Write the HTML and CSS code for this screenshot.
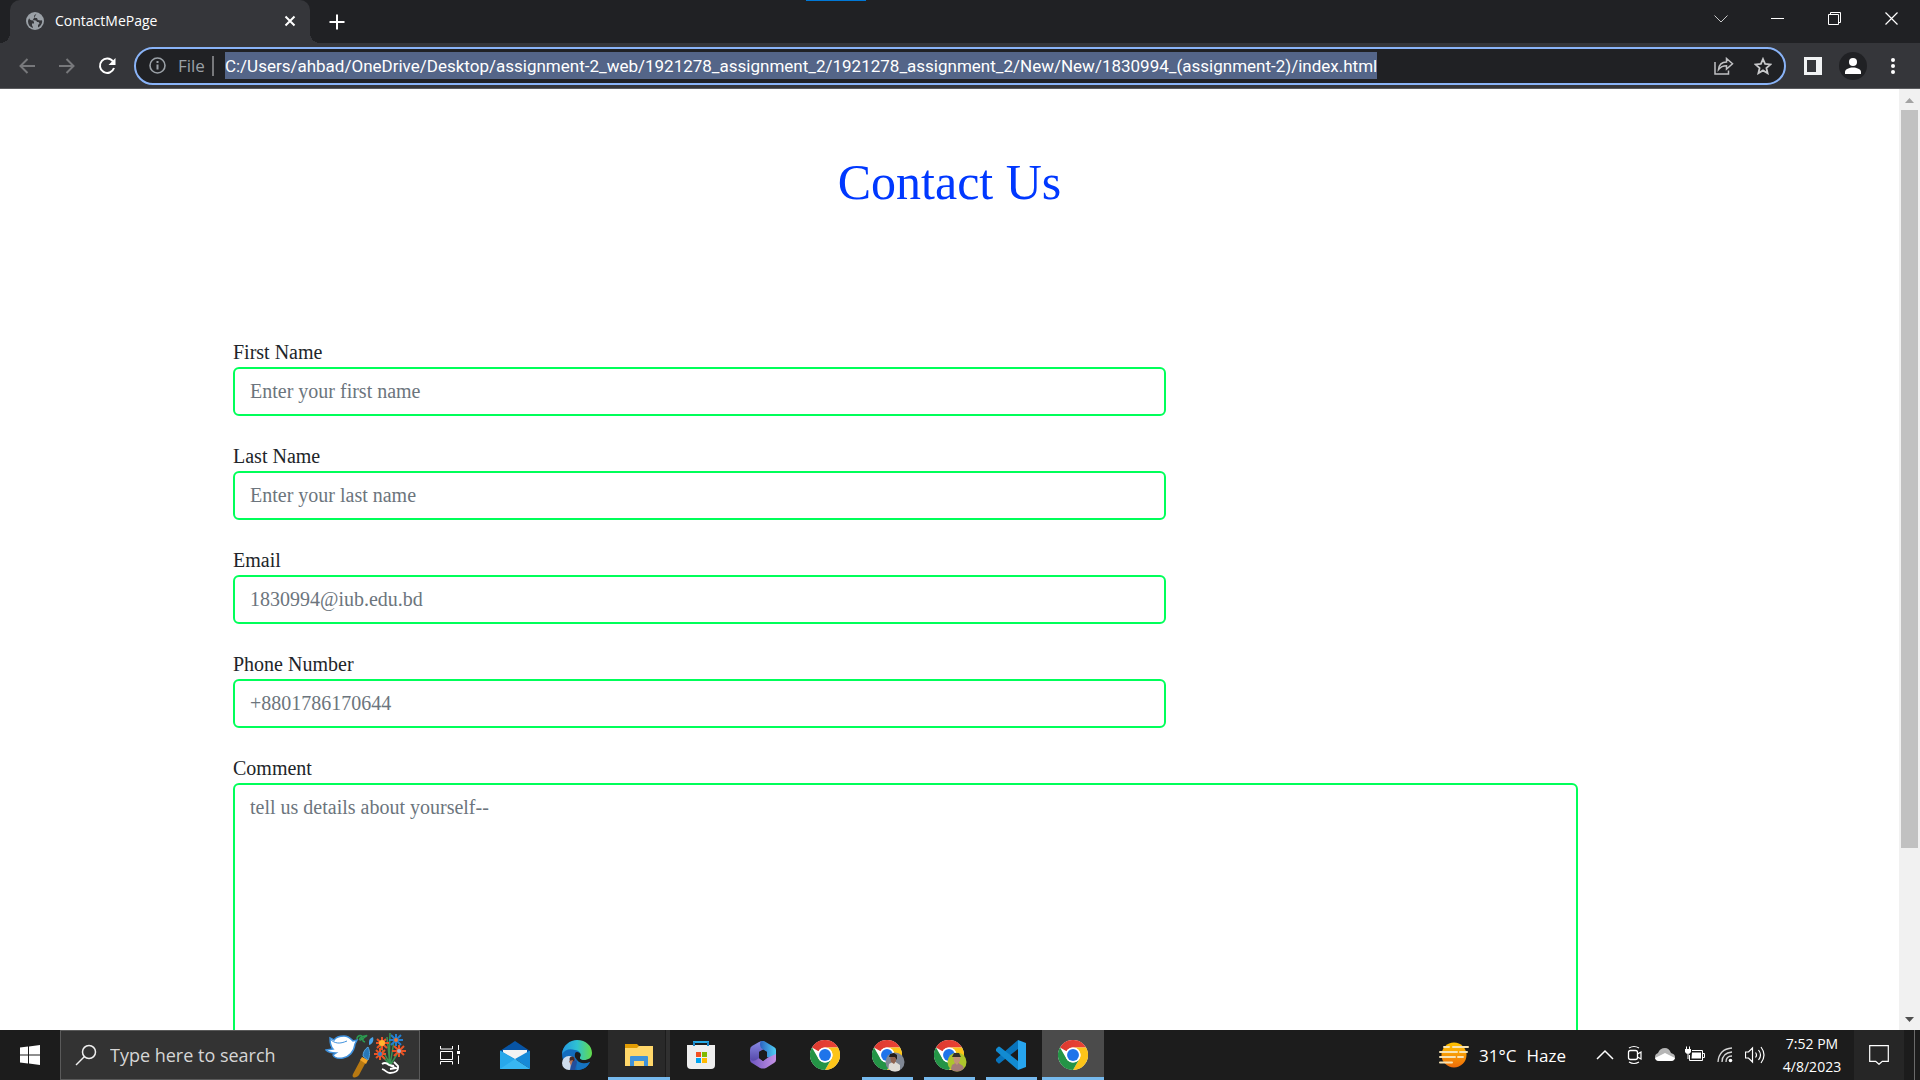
FILE: index.html
```html
<!DOCTYPE html>
<html lang="en">
<head>
<meta charset="utf-8">
<meta name="viewport" content="width=device-width, initial-scale=1">
<title>ContactMePage</title>
<link rel="stylesheet" href="styles.css">
</head>
<body>
<svg class="defs" aria-hidden="true">
  <defs>
    <linearGradient id="red" x1="0" y1="0" x2="1" y2="0"><stop offset="0" stop-color="#dd3a30"/><stop offset="1" stop-color="#ea4335"/></linearGradient>
    <symbol id="chrome" viewBox="0 0 48 48">
      <circle cx="24" cy="24" r="24" fill="#fff"/>
      <path d="M3.2 12A24 24 0 0 1 44.8 12H24A12 12 0 0 0 13.6 18Z" fill="url(#red)"/>
      <path d="M44.8 12A24 24 0 0 1 24 48L34.4 30A12 12 0 0 0 24 12Z" fill="#fcc419"/>
      <path d="M24 48A24 24 0 0 1 3.2 12L13.6 30A12 12 0 0 0 34.4 30Z" fill="#249446"/>
      <circle cx="24" cy="24" r="12" fill="#fff"/>
      <circle cx="24" cy="24" r="9.5" fill="#1f74ea"/>
    </symbol>
  </defs>
</svg>
<div class="screen">
  <header class="browser">
    <div class="tabstrip">
      <div class="tab">
        <svg width="18" height="18" viewBox="0 0 18 18"><circle cx="9" cy="9" r="9" fill="#9aa0a6"/><path d="M3 5.500c0 2 2 3 3.500 3l1.500 1v2H6v1.500c0 1 1 1.500 1 3-3-1-5-3-5-6.500 0-1 .4-2.200 1-3zM10.500 1.700C9 3 8 3 8 4.500S9 6 11 6l.8 2 2.700.5c1-.4 1.500-.2 1.700.5 0 3-2 5.500-4.200 6.500V13l1.500-1.500-1-1.500H10l-1.500-1.500H6.500" fill="#35363a"/><path d="M7 8.500h3l1.500 2-1 2" fill="#9aa0a6"/></svg>
        <span class="tab-title">ContactMePage</span>
        <button class="icon-btn" aria-label="Close tab"><svg width="12" height="12" viewBox="0 0 12 12"><path d="M1.500 1.500l9 9M10.500 1.500l-9 9" stroke="#fff" stroke-width="2"/></svg></button>
      </div>
      <button class="icon-btn new-tab" aria-label="New tab"><svg width="16" height="16" viewBox="0 0 16 16"><path d="M8 .5v15M.5 8h15" stroke="#fff" stroke-width="2"/></svg></button>
      <div class="window-controls">
        <button class="icon-btn" aria-label="Search tabs"><svg width="14" height="8" viewBox="0 0 14 8"><path d="M.5.500l6.500 6.500 6.500-6.500" fill="none" stroke="#c8c9ca"/></svg></button>
        <button class="icon-btn" aria-label="Minimize"><svg width="13" height="13" viewBox="0 0 13 13"><path d="M0 6.500h13" stroke="#fff"/></svg></button>
        <button class="icon-btn" aria-label="Restore"><svg width="13" height="13" viewBox="0 0 13 13"><path d="M.5 2.500h10v10H.5zM2.500 2V.5h10v10H11" fill="none" stroke="#fff"/></svg></button>
        <button class="icon-btn" aria-label="Close"><svg width="13" height="13" viewBox="0 0 13 13"><path d="M.5.500l12 12M12.500.500l-12 12" stroke="#fff" stroke-width="1.200"/></svg></button>
      </div>
      <div class="drag-mark"></div>
    </div>
    <nav class="toolbar">
      <button class="icon-btn nav-btn" aria-label="Back"><svg width="16" height="16" viewBox="0 0 16 16"><path d="M16 8H1.500M8.500 1L1.500 8l7 7" fill="none" stroke="#77787b" stroke-width="2"/></svg></button>
      <button class="icon-btn nav-btn" aria-label="Forward"><svg width="16" height="16" viewBox="0 0 16 16"><path d="M0 8h14.500M7.500 1l7 7-7 7" fill="none" stroke="#77787b" stroke-width="2"/></svg></button>
      <button class="icon-btn nav-btn" aria-label="Reload"><svg width="18" height="18" viewBox="0 0 18 18"><path d="M15 4.500A7.200 7.200 0 1 0 16 11" fill="none" stroke="#fff" stroke-width="2"/><path d="M17.500 1v7h-7z" fill="#fff"/></svg></button>
      <div class="omnibox">
        <svg width="17" height="17" viewBox="0 0 17 17"><circle cx="8.500" cy="8.500" r="7.500" fill="none" stroke="#9aa0a6" stroke-width="1.600"/><path d="M8.500 7.500v5M8.500 4v2" stroke="#9aa0a6" stroke-width="2"/></svg>
        <label class="scheme" for="url">File</label>
        <span class="divider"></span>
        <input class="url" id="url" type="text" value="C:/Users/ahbad/OneDrive/Desktop/assignment-2_web/1921278_assignment_2/1921278_assignment_2/New/New/1830994_(assignment-2)/index.html">
        <div class="omnibox-actions">
          <button class="icon-btn" aria-label="Share"><svg width="20" height="18" viewBox="0 0 20 18"><path d="M1 5v12h13.500v-3.500M4.500 12.500C5 8 8 5 12.500 5V1.500l6 5.300-6 5.200V8.800C9 8.800 6.500 10 4.500 12.500z" fill="none" stroke="#c0c1c3" stroke-width="1.500"/></svg></button>
          <button class="icon-btn" aria-label="Bookmark"><svg width="18" height="18" viewBox="0 0 18 18"><path d="M9 2l2.100 4.900 5.400.5-4.100 3.600 1.200 5.200L9 13.400l-4.600 2.800 1.200-5.200-4.100-3.600 5.400-.5z" fill="none" stroke="#c8c9cb" stroke-width="1.800"/></svg></button>
        </div>
      </div>
      <button class="icon-btn side-btn" aria-label="Side panel"><svg width="18" height="18" viewBox="0 0 18 18"><path d="M0 0h18v18H0zM3 3v12h9V3z" fill="#f1f3f4" fill-rule="evenodd"/></svg></button>
      <button class="icon-btn side-btn" aria-label="Profile"><svg width="28" height="28" viewBox="0 0 28 28"><circle cx="14" cy="14" r="14" fill="#202124"/><circle cx="14" cy="10" r="4" fill="#fff"/><path d="M6 22v-2c0-3 4.500-4.500 8-4.500s8 1.500 8 4.500v2z" fill="#fff"/></svg></button>
      <button class="icon-btn side-btn" aria-label="Menu"><svg width="4" height="16" viewBox="0 0 4 16"><g fill="#fff"><circle cx="2" cy="2" r="2"/><circle cx="2" cy="8" r="2"/><circle cx="2" cy="14" r="2"/></g></svg></button>
    </nav>
  </header>

  <div class="viewport">
    <main class="page">
      <h1>Contact Us</h1>
      <form class="contact">
        <label for="first">First Name</label>
        <input class="field" id="first" type="text" placeholder="Enter your first name">
        <label for="last">Last Name</label>
        <input class="field" id="last" type="text" placeholder="Enter your last name">
        <label for="email">Email</label>
        <input class="field" id="email" type="email" placeholder="1830994@iub.edu.bd">
        <label for="phone">Phone Number</label>
        <input class="field" id="phone" type="tel" placeholder="+8801786170644">
        <label for="comment">Comment</label>
        <textarea class="field comment" id="comment" placeholder="tell us details about yourself--"></textarea>
      </form>
    </main>
    <div class="scrollbar" aria-hidden="true">
      <svg width="9" height="5" viewBox="0 0 9 5"><path d="M0 5L4.500 0 9 5z" fill="#a3a3a3"/></svg>
      <div class="track"><div class="thumb"></div></div>
      <svg width="9" height="5" viewBox="0 0 9 5"><path d="M0 0l4.500 5L9 0z" fill="#505050"/></svg>
    </div>
  </div>

  <footer class="taskbar">
    <button class="icon-btn start" aria-label="Start"><svg width="20" height="20" viewBox="0 0 20 20"><path d="M0 2.600L8 1.500v8H0zM9 1.400L20 0v9.500H9zM0 10.500h8v8l-8-1.100zM9 10.500h11V20L9 18.600z" fill="#fff"/></svg></button>
    <div class="search">
      <svg width="22" height="22" viewBox="0 0 22 22"><circle cx="14" cy="8" r="6.500" fill="none" stroke="#f0f0f0" stroke-width="1.500"/><path d="M9.500 12.500L1 21" stroke="#f0f0f0" stroke-width="1.500"/></svg>
      <input type="text" placeholder="Type here to search" aria-label="Type here to search">
      <svg class="doodle" width="82" height="46" viewBox="0 0 82 46">
        <path d="M1 18l7-1C5 14 5 10 5 6l4 2c2-3 6-4 10-4 5 0 7 3 9 5l4-1-2 4c-1 8-6 13-12 14-6 1-9-1-10-3l3-2c-5 0-8-1-10-3z" fill="#fff" stroke="#3f91dd" stroke-width="1.500"/><path d="M5 7c5 5 10 5 17 2" fill="none" stroke="#3f91dd"/>
        <path d="M32 7c0-4 6-5 5-1s-5 1 0-1 6-2 3 0-3 4 0 5" fill="none" stroke="#2c9b51" stroke-width="1.500"/>
        <path d="M36 27l5 3-7 13c-2 3-8 4-6-1z" fill="#b87912"/><path d="M37 25l6 3-2 4-6-4z" fill="#f4a526"/><path d="M38 24c0-4 2-7 5-9 2 4 2 9 0 13z" fill="#2878b8" stroke="#55a5e0"/><path d="M44 10c0-3 2-4 4-5 1 3 0 7-4 8z" fill="#4aa5ea"/>
        <path d="M65 33L62 5M64 33L65 1M65 33l4-24M64 32L54 20M66 32l8-13M64 30l-9-16" fill="none" stroke="#399452" stroke-width="1.500"/>
        <g stroke="#ea5425" stroke-width="2"><path d="M57 5v13M51 11h13M52 7l10 9M52 16l9-9M55 16v12M49 22h12M51 18l9 9M51 26l9-8M74 13v12M67 19h14M69 14l10 9M69 24l10-10"/></g>
        <path d="M71 2v12M64 8h14M66 3l10 10M66 13L76 3" stroke="#237fd1" stroke-width="2"/>
        <circle cx="57" cy="11" r="3" fill="#ffb52e"/><circle cx="55" cy="22" r="2" fill="#2782d0"/><circle cx="74" cy="19" r="2" fill="#a5b0c8"/><circle cx="71" cy="8" r="2" fill="#f0742b"/>
        <path d="M57 32c3-2 5-1 7 1l5 1M57 37c4 1 4 4 8 4 5 0 9-2 8-7l-4-4M64 33l7 3-6 1" fill="none" stroke="#fff" stroke-width="1.800"/>
      </svg>
    </div>
    <div class="apps">
      <button class="app task-view" aria-label="Task view"><svg width="20" height="20" viewBox="0 0 20 20"><path d="M.5 1v3h12V1M.5 6.500h12v8H.500zM.5 19.500v-3h12v3M18.500 0v5M18.500 10.500V19" fill="none" stroke="#fff"/><path d="M17 6h3v3h-3z" fill="#fff"/></svg></button>
      <button class="app" aria-label="Mail"><svg width="30" height="28" viewBox="0 0 30 28"><path d="M0 10L15 0l15 10v4H0z" fill="#0754a4"/><path d="M3 9h24v4L15 19 3 13z" fill="#f3f3f3"/><path d="M0 9.500l15 8.500L0 28z" fill="#1a96dd"/><path d="M0 9.500l30 18.500H0z" fill="#28a8ea"/><path d="M30 9.500V28L15 18z" fill="#1689d7"/><path d="M15 18l15 10H0z" fill="#38b6f2"/></svg></button>
      <button class="app" aria-label="Edge"><svg width="30" height="30" viewBox="0 0 30 30"><defs><linearGradient id="eg"><stop offset="0" stop-color="#2396df"/><stop offset=".5" stop-color="#2fc2d2"/><stop offset="1" stop-color="#63dc49"/></linearGradient></defs><path d="M0 14C1 5 8 1 15 3l3 10-4 2 1 6c4 4 8 4 13 1-3 6-8 8-13 8C6 30 0 23 0 14z" fill="#126cbe"/><path d="M0 14C1 5 8 0 15 0c9 0 15 6 15 13 0 5-4 7-8 7-3 0-5-1-4-3 2-3-1-7-5-7C7 8 3 10 0 14z" fill="url(#eg)"/><path d="M15 12c3 0 4 3 3 5-1 3 3 4 7 3-5 2-11 0-12-3-.5-3 0-5 2-5z" fill="#1c1c1c"/><path d="M15 20c3 4 8 4 13 2-3 6-8 8-13 8z" fill="#1673c0"/><circle cx="7" cy="23" r="7" fill="#cfdcec"/><path d="M7 21l5-3 3 4-2 8H8l1-6z" fill="#234e9b"/><circle cx="10" cy="19" r="2.500" fill="#4a2a27"/><path d="M7 21l4-1-2 6z" fill="#b77759"/></svg></button>
      <button class="app hover running" aria-label="File Explorer"><svg width="28" height="24" viewBox="0 0 28 24"><path d="M0 1h12l2 2v5H0z" fill="#e19c03"/><path d="M0 5h12l2-2h14v20H0z" fill="#ffd76a"/><path d="M5 23V14q0-1 1-1h16q1 0 1 1v9h-4v-5H9v5z" fill="#3f92d9"/></svg></button>
      <button class="app" aria-label="Microsoft Store"><svg width="30" height="30" viewBox="0 0 30 30"><path d="M8 6V2h14v4" fill="none" stroke="#26a9e6" stroke-width="2"/><path d="M1 5h28v20q0 4-4 4H5q-4 0-4-4z" fill="#eee"/><path d="M8 2v4M22 2v4" stroke="#1a86c8" stroke-width="2"/><path d="M10 12h5v5h-5z" fill="#f25022"/><path d="M16 12h5v5h-5z" fill="#7fba00"/><path d="M10 18h5v5h-5z" fill="#00a4ef"/><path d="M16 18h5v5h-5z" fill="#ffb900"/></svg></button>
      <button class="app" aria-label="Microsoft 365"><svg width="26" height="28" viewBox="0 0 26 28"><defs><linearGradient id="m1" x2="0" y2="1"><stop offset="0" stop-color="#8a8be6"/><stop offset="1" stop-color="#5547a8"/></linearGradient><linearGradient id="m2"><stop offset="0" stop-color="#2c62c0"/><stop offset="1" stop-color="#50d0f5"/></linearGradient><linearGradient id="m3"><stop offset="0" stop-color="#6d55c0"/><stop offset="1" stop-color="#c592e6"/></linearGradient></defs><path d="M13 0q-2 0-4 1L2 5Q0 6 0 9v10q1 2 5 1l4-2v-7l8-5z" fill="url(#m1)"/><path d="M11 0h3l10 6q2 1 2 3v10l-9-3v-5l-6-4q-2-4 0-7z" fill="url(#m2)"/><path d="M0 18q2 3 6 1l3-2 4 3 4-3 9-4v6q0 2-2 3l-8 5q-3 1-6 0l-8-5q-2-1-2-4z" fill="url(#m3)"/><path d="M13 9l4 2v6l-4 3-4-3v-6z" fill="#1c1c1c"/></svg></button>
      <button class="app" aria-label="Chrome"><svg width="30" height="30"><use href="#chrome"/></svg></button>
      <button class="app running inset" aria-label="Chrome, profile one"><svg width="30" height="30"><use href="#chrome"/></svg><svg class="avatar" width="20" height="20" viewBox="0 0 20 20"><defs><clipPath id="av"><circle cx="10" cy="10" r="9.500"/></clipPath></defs><g clip-path="url(#av)"><path d="M0 0h20v20H0z" fill="#7f8794"/><path d="M3 20l1-8 5-3 6 4v7z" fill="#dedbd6"/><path d="M5 4h6v5l-2 3-3-2z" fill="#8f6350"/><path d="M4 5l1-3 4-1 3 2v5l-2-3z" fill="#211d1e"/></g></svg></button>
      <button class="app running inset" aria-label="Chrome, profile two"><svg width="30" height="30"><use href="#chrome"/></svg><svg class="avatar" width="20" height="20" viewBox="0 0 20 20"><g clip-path="url(#av)"><path d="M0 0h20v20H0z" fill="#adc52d"/><path d="M3 20l2-7 5-3 6 4 2 6z" fill="#a47c78"/><path d="M6 4h7v5l-3 4-3-3z" fill="#c29477"/><path d="M5 5l2-4h5l2 4z" fill="#34302b"/></g></svg></button>
      <button class="app running inset" aria-label="Visual Studio Code"><svg width="30" height="30" viewBox="0 0 30 30"><path d="M22 0l8 3v24l-8 3z" fill="#27a5ef"/><path d="M22 0v9L4 23q-1 1-2 0l-2-2q-1-1 0-2z" fill="#0873bb"/><path d="M22 30v-9L4 7Q3 6 2 7L0 9q-1 1 0 2z" fill="#128bd2"/></svg></button>
      <button class="app active running" aria-label="Chrome, active window"><svg width="30" height="30"><use href="#chrome"/></svg></button>
    </div>
    <div class="tray">
      <button class="weather"><svg width="30" height="26" viewBox="0 0 30 26"><defs><linearGradient id="sun" x2="0" y2="1"><stop offset="0" stop-color="#ffc400"/><stop offset="1" stop-color="#ef6c0a"/></linearGradient></defs><circle cx="15" cy="13" r="12.500" fill="url(#sun)"/><path d="M5 5h5M14 5h15M1 10h17M21 10h7M1 15h15M19 15h5M1 20.500h12" stroke="#f7e3b4" stroke-width="2" stroke-linecap="round"/></svg><span>31°C</span><span>Haze</span></button>
      <div class="status">
        <button class="icon-btn" aria-label="Show hidden icons"><svg width="20" height="20" viewBox="0 0 20 20"><path d="M2 14l8-8 8 8" fill="none" stroke="#fff" stroke-width="1.500"/></svg></button>
        <button class="icon-btn" aria-label="Meet now"><svg width="20" height="20" viewBox="0 0 20 20"><rect x="3.500" y="5.500" width="9" height="9" rx="2" fill="none" stroke="#fff" stroke-width="1.300"/><path d="M12.500 9l3.500-2v7l-3.500-2M4 3q5-3 10 0M4 17q5 3 10 0" fill="none" stroke="#fff" stroke-width="1.200"/></svg></button>
        <button class="icon-btn" aria-label="OneDrive"><svg width="20" height="20" viewBox="0 0 20 20"><path d="M4 16Q0 16 0 12q0-3 3-4 2-5 7-5 4 0 6 5 4 1 4 4 0 4-4 4z" fill="#b5b5b5"/><path d="M4 16q-3 0-4-3l10-5 10 5q-1 3-4 3z" fill="#fff"/></svg></button>
        <button class="icon-btn" aria-label="Battery"><svg width="20" height="20" viewBox="0 0 20 20"><path d="M7 5.500h10.500v10H4.500V10M18 8.500h1.500v4H18" fill="none" stroke="#fff"/><path d="M7 7.500h9v6H6.500zM0 4h6v3q-1 2-3 2T0 7zM1 1.500h1V4H1zM4 1.500h1V4H4zM2.500 9h1v5h-1z" fill="#fff"/></svg></button>
        <button class="icon-btn" aria-label="Network"><svg width="20" height="20" viewBox="0 0 20 20"><path d="M3 17Q4 4 17 3M7 17Q7 8 17 7M11 17q0-6 6-6" fill="none" stroke="#d6d6d6" stroke-width="1.300"/><circle cx="15.500" cy="15.500" r="1.800" fill="#fff"/></svg></button>
        <button class="icon-btn" aria-label="Volume"><svg width="20" height="20" viewBox="0 0 20 20"><path d="M.5 7h3l4-4v14l-4-4h-3zM10.500 7.500q2 2.500 0 5M13.500 5q4 5 0 10M16 2q6 8 0 16" fill="none" stroke="#fff" stroke-width="1.200"/></svg></button>
      </div>
      <time class="clock" datetime="2023-04-08T19:52"><span>7:52 PM</span><span>4/8/2023</span></time>
      <button class="icon-btn notices" aria-label="Notifications"><svg width="20" height="20" viewBox="0 0 20 20"><path d="M.7.700h18.600v15.600h-6L10 19.300l-3.300-3H.7z" fill="none" stroke="#fff" stroke-width="1.200"/></svg></button>
      <span class="show-desktop"></span>
    </div>
  </footer>
</div>
</body>
</html>
```
FILE: styles.css
```css
* { box-sizing: border-box; }
body { margin: 0; background: #fff; font-family: "Open Sans", "Noto Sans", sans-serif; }
svg { display: block; flex: none; }
.defs { position: absolute; width: 0; height: 0; }
.screen { height: 100vh; display: flex; flex-direction: column; overflow: hidden; }
button { font: inherit; color: inherit; border: 0; padding: 0; background: none; }
.icon-btn { display: flex; align-items: center; justify-content: center; flex: none; }

/* Browser frame */
.browser { flex: none; background: #35363a; color: #fff; border-bottom: 1px solid #5b5c5f; }
.tabstrip { position: relative; display: flex; height: 43px; background: #202124; padding-left: 10px; }
.tab { position: relative; display: flex; align-items: center; gap: 11px; width: 300px; padding: 0 14px 2px 16px; background: #35363a; border-radius: 10px 10px 0 0; }
.tab::before, .tab::after { content: ""; position: absolute; bottom: 0; width: 10px; height: 10px; }
.tab::before { left: -10px; background: radial-gradient(circle at 0 0, #202124 10px, #35363a 10px); }
.tab::after { right: -10px; background: radial-gradient(circle at 100% 0, #202124 10px, #35363a 10px); }
.tab-title { flex: 1; font-size: 14px; line-height: 20px; }
.new-tab { width: 54px; }
.window-controls { display: flex; margin-left: auto; height: 37px; }
.window-controls .icon-btn { width: 57px; }
.drag-mark { position: absolute; left: 42%; top: 0; width: 60px; height: 1px; background: #0078d7; }
.toolbar { display: flex; align-items: center; height: 45px; padding: 0 7px; }
.nav-btn { width: 40px; }
.omnibox { flex: 1; min-width: 0; display: flex; align-items: center; height: 38px; margin: 0 7px; padding: 0 12px 0 13px; border: 2px solid #8ab4f8; border-radius: 19px; background: #202124; font-size: 17px; }
.scheme { margin-left: 12px; color: #9aa0a6; }
.divider { width: 2px; height: 20px; margin: 0 11px 0 7px; background: #77787b; }
.url { min-width: 0; height: 27px; padding: 0; border: 0; border-radius: 0; background: #546588; color: #fff; font-family: Roboto, "Open Sans", sans-serif; font-size: 17px; field-sizing: content; }
.omnibox-actions { display: flex; gap: 20px; margin-left: auto; }
.side-btn { width: 40px; }

/* Page content */
.viewport { flex: 1; min-height: 0; display: flex; }
.page { flex: 1; overflow: hidden; padding-top: 63px; font-family: "Liberation Serif", serif; color: #212529; }
h1 { margin: 0 0 125px; text-align: center; font-size: 50px; line-height: 60px; font-weight: 400; color: #0038ff; }
.contact { display: flex; flex-direction: column; align-items: flex-start; margin: 0 321px 0 233px; font-size: 20px; line-height: 30px; }
.field { width: 69.4%; height: 49px; margin: 0 0 25px; padding: 0 15px; border: 2px solid #00ff59; border-radius: 6px; background: #fff; font: inherit; color: #212529; }
.field::placeholder { color: #6c757d; opacity: 1; }
.comment { width: 100%; height: 320px; padding: 7px 15px; }
.scrollbar { flex: none; width: 21px; display: flex; flex-direction: column; align-items: center; padding: 9px 0 8px; background: #f1f1f1; }
.track { flex: 1; width: 17px; margin: 7px 0; }
.thumb { height: 82%; background: #c1c1c1; }

/* Taskbar */
.taskbar { flex: none; display: flex; height: 50px; background: #1c1c1c; color: #fff; }
.start { width: 60px; }
.search { display: flex; align-items: center; width: 360px; padding: 0 12px 0 14px; gap: 13px; background: #333; border: 1px solid #5a5a5a; }
.search input { flex: 1; min-width: 0; padding: 0; border: 0; background: none; color: #fff; font: inherit; font-size: 18px; }
.search input::placeholder { color: #d6d6d6; opacity: 1; }
.apps { display: flex; }
.app { position: relative; display: flex; align-items: center; justify-content: center; width: 62px; }
.task-view { width: 60px; margin-right: 4px; }
.running::after { content: ""; position: absolute; inset: auto 0 0; height: 3px; background: #76b9ed; }
.inset::after { inset: auto 5px 0 6px; }
.hover { background: linear-gradient(to left, #303030 4px, #1c1c1c 4px, #1c1c1c 5px, #292929 5px); }
.active { background: #4b4b4b; }
.avatar { position: absolute; right: 13px; bottom: 8px; }
.tray { display: flex; align-items: center; margin-left: auto; }
.weather { display: flex; align-items: center; gap: 10px; font-size: 17px; margin-right: 29px; }
.status { display: flex; gap: 10px; }
.clock { display: flex; flex-direction: column; width: 84px; margin-left: 5px; text-align: center; font-size: 14px; line-height: 23px; }
.notices { width: 50px; height: 100%; background: #262626; }
.show-desktop { width: 6px; height: 100%; margin-left: 10px; border-left: 1px solid #6a6a6a; }
```
